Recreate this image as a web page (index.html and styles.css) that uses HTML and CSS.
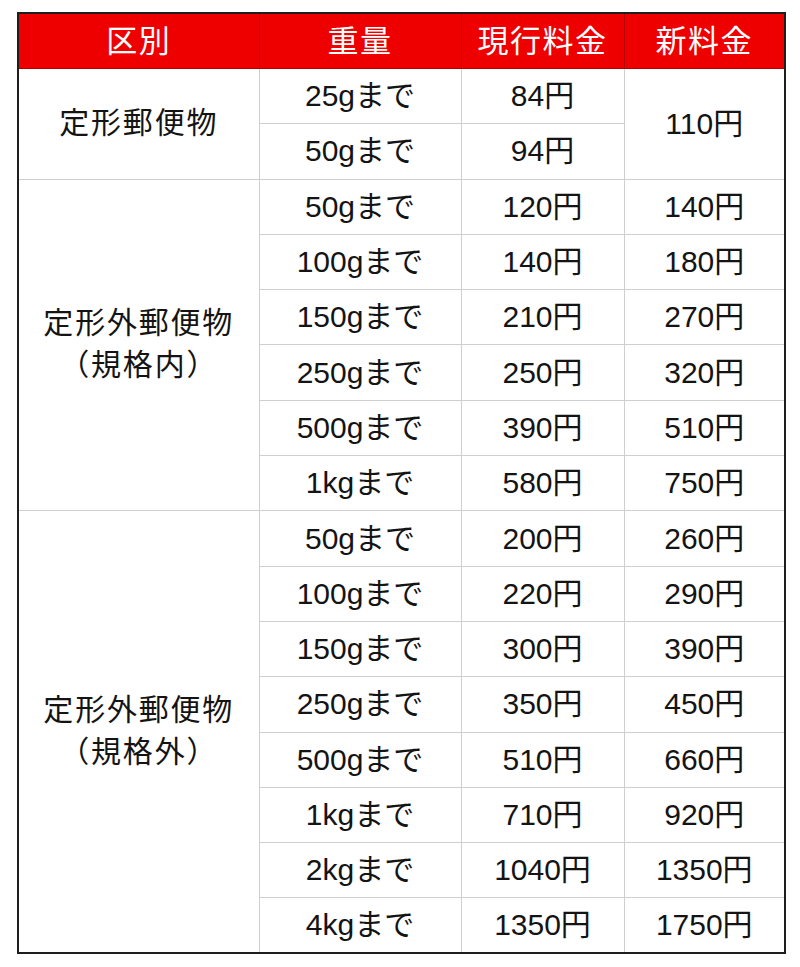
FILE: index.html
```html
<!DOCTYPE html>
<html lang="ja">
<head>
<meta charset="utf-8">
<link rel="stylesheet" href="styles.css">
</head>
<body>
<table class="rates">
  <colgroup>
    <col class="c1"><col class="c2"><col class="c3"><col class="c4">
  </colgroup>
  <thead>
    <tr class="head">
      <th class="h1">区別</th>
      <th>重量</th>
      <th>現行料金</th>
      <th class="h4">新料金</th>
    </tr>
  </thead>
  <tbody>
    <tr><td class="cat" rowspan="2">定形郵便物</td><td>25gまで</td><td>84円</td><td rowspan="2">110円</td></tr>
    <tr><td>50gまで</td><td>94円</td></tr>

    <tr><td class="cat" rowspan="6">定形外郵便物<br>（規格内）</td><td>50gまで</td><td>120円</td><td>140円</td></tr>
    <tr><td>100gまで</td><td>140円</td><td>180円</td></tr>
    <tr><td>150gまで</td><td>210円</td><td>270円</td></tr>
    <tr><td>250gまで</td><td>250円</td><td>320円</td></tr>
    <tr><td>500gまで</td><td>390円</td><td>510円</td></tr>
    <tr><td>1kgまで</td><td>580円</td><td>750円</td></tr>

    <tr><td class="cat" rowspan="8">定形外郵便物<br>（規格外）</td><td>50gまで</td><td>200円</td><td>260円</td></tr>
    <tr><td>100gまで</td><td>220円</td><td>290円</td></tr>
    <tr><td>150gまで</td><td>300円</td><td>390円</td></tr>
    <tr><td>250gまで</td><td>350円</td><td>450円</td></tr>
    <tr><td>500gまで</td><td>510円</td><td>660円</td></tr>
    <tr><td>1kgまで</td><td>710円</td><td>920円</td></tr>
    <tr><td>2kgまで</td><td>1040円</td><td>1350円</td></tr>
    <tr><td>4kgまで</td><td>1350円</td><td>1750円</td></tr>
  </tbody>
</table>
</body>
</html>
```

FILE: styles.css
```css
html, body {
  margin: 0;
  padding: 0;
  background: #ffffff;
}

body {
  padding: 12px 0 0 17px;
  font-family: "Liberation Sans", "Noto Sans CJK JP", sans-serif;
  color: #141414;
}

.rates {
  border-collapse: collapse;
  table-layout: fixed;
  width: 767px;
  border: 2px solid #1e1e1e;
}

.c1 { width: 241px; }
.c2 { width: 202px; }
.c3 { width: 163px; }
.c4 { width: 161px; }

.rates th,
.rates td {
  padding: 0;
  text-align: center;
  vertical-align: middle;
  border: 1px solid #cfcfcf;
  font-size: 30px;
  line-height: 42px;
  font-weight: normal;
}

.rates .head th {
  background: #ee0000;
  color: #ffffff;
  height: 50px;
  padding-bottom: 4px;
  border-color: #b10000;
  border-top: 2px solid #1e1e1e;
  font-family: "Noto Sans CJK JP", sans-serif;
  font-size: 31px;
  letter-spacing: 1.5px;
}

.rates .head th.h1 { border-left: 2px solid #1e1e1e; }
.rates .head th.h4 { border-right: 2px solid #1e1e1e; }

.rates tbody tr {
  height: 55.3px;
}

.rates td.cat {
  font-family: "Noto Sans CJK JP", sans-serif;
  font-size: 30px;
  letter-spacing: 1.8px;
  line-height: 42px;
  padding-bottom: 8px;
}
```
